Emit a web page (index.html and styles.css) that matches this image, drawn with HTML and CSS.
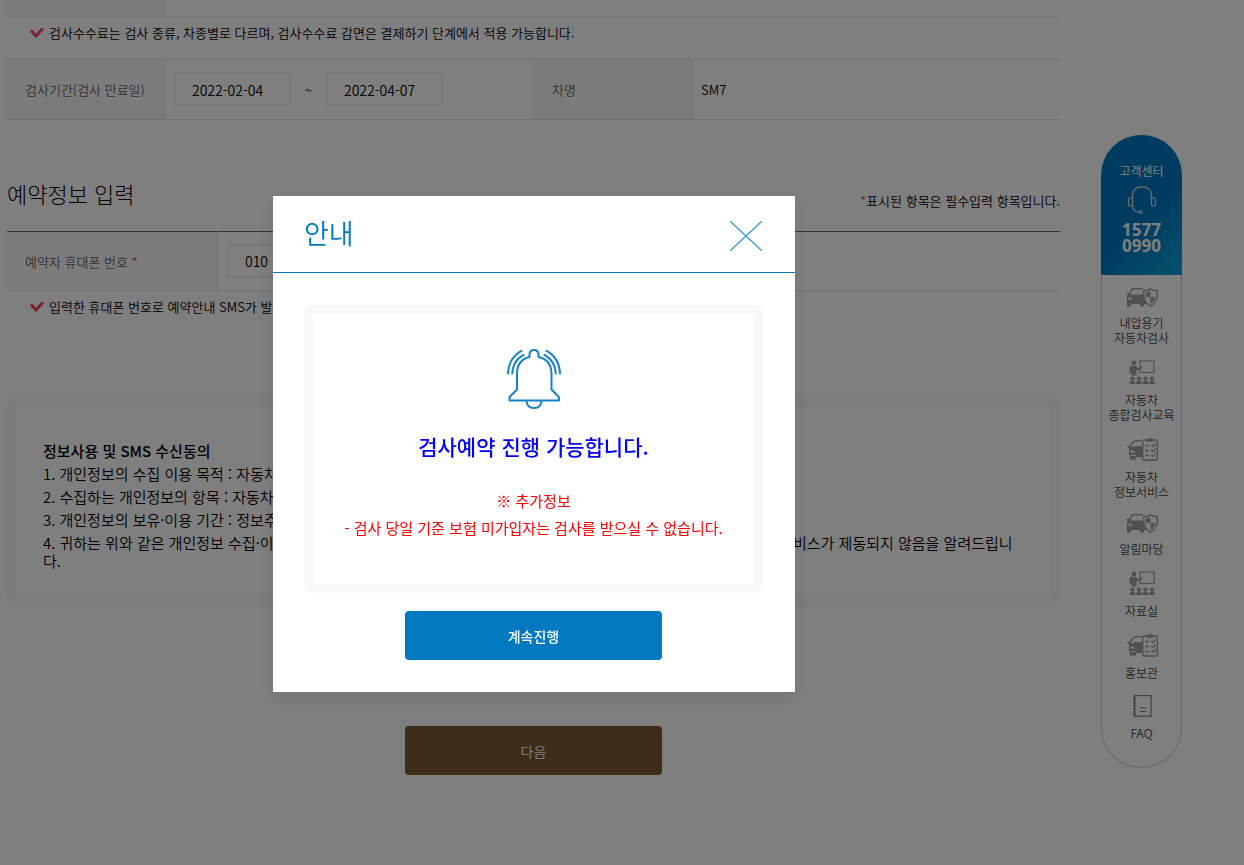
FILE: index.html
```html
<!DOCTYPE html>
<html lang="ko">
<head>
  <meta charset="UTF-8">
  <title>검사예약</title>
  <link rel="stylesheet" href="styles.css">
</head>
<body>
  <!-- shared icons -->
  <svg class="sprite" aria-hidden="true">
    <symbol id="icon-check" viewBox="0 0 14 12">
      <path d="M2 4.5 L6 9 L12 2.5" fill="none" stroke="#f04a66" stroke-width="3.2" stroke-linecap="round" stroke-linejoin="round"/>
    </symbol>
    <symbol id="icon-car" viewBox="0 0 32 19">
      <path d="M3.500 7 L5.500 1.800 Q6 .8 7 .8 H17" fill="none" stroke="#a0a0a0" stroke-width="1.600"/>
      <path d="M0 4.500 L2.500 4.500 L3.500 6.500 H17 Q17.500 12 21 15.500 V16 H18 V18.500 H14 V16 H5 V18.500 H1 V8 L2 6.500 Z" fill="#a0a0a0"/>
      <path d="M2.500 9 L6 10 V11.800 H3 Z" fill="#fff"/>
      <path d="M24.500 .8 Q27.500 2.500 31.200 2.700 V8 Q30.500 15 24.500 18.200 Q18.500 15 17.800 8 V2.700 Q21.500 2.500 24.500 .8 Z" fill="#fff" stroke="#a0a0a0" stroke-width="1.500"/>
      <path d="M24.500 3 V9 H19.800 V4.500 Q22.500 4.300 24.500 3 Z M24.500 9 H29.200 Q28.500 13.500 24.500 16 Z" fill="#a0a0a0"/>
    </symbol>
    <symbol id="icon-class" viewBox="0 0 26 24">
      <rect x="11" y="1" width="14" height="11.500" fill="none" stroke="#a0a0a0" stroke-width="1.200"/>
      <circle cx="5" cy="2.800" r="2.400" fill="#a0a0a0"/>
      <path d="M.5 7.500 Q.5 5.800 2.500 5.800 H7 L9.500 8.500 L13 6 L13.800 7.200 L9.500 10.800 L7.500 9.500 V15.500 H2.500 V13 H.5 Z" fill="#a0a0a0"/>
      <g fill="#a0a0a0">
        <circle cx="3.500" cy="18.500" r="2.100"/><path d="M.5 24 Q.5 20.500 3.500 20.500 T6.500 24 Z"/>
        <circle cx="10" cy="18.500" r="2.100"/><path d="M7 24 Q7 20.500 10 20.500 T13 24 Z"/>
        <circle cx="16.500" cy="18.500" r="2.100"/><path d="M13.500 24 Q13.500 20.500 16.500 20.500 T19.500 24 Z"/>
        <circle cx="23" cy="18.500" r="2.100"/><path d="M20 24 Q20 20.500 23 20.500 T26 24 Z"/>
      </g>
    </symbol>
    <symbol id="icon-list" viewBox="0 0 32 24">
      <path d="M4 9.500 L6.500 5.500 Q8 3.600 15.500 3.500" fill="none" stroke="#a0a0a0" stroke-width="1.500"/>
      <path d="M.5 8.500 L3 8.500 L4.500 10 Q10 9 16 9 V20 H10 V22.500 H4 V20 L3 18 V11 Z" fill="#a0a0a0"/>
      <path d="M4.500 13 L8.500 14.300 V15.800 H5 Z M4.500 18 H10 V19 H4.500 Z" fill="#fff"/>
      <rect x="16.700" y="3" width="14.600" height="20" rx="1.500" fill="#fff" stroke="#a0a0a0" stroke-width="1.500"/>
      <path d="M20.500 4.800 V2.500 H22.500 Q22.500 .3 24 .3 T25.500 2.500 H27.500 V4.800 Z" fill="#a0a0a0"/>
      <path d="M19 8.500 H23 M19 13.500 H23 M19 18.500 H23 M25.500 8 L27 9.500 L29.500 6.500 M25.500 13 L27 14.500 L29.500 11.500 M25.500 18 L27 19.500 L29.500 16.500" fill="none" stroke="#a0a0a0" stroke-width="1.300"/>
    </symbol>
    <symbol id="icon-book" viewBox="0 0 20 22">
      <rect x="2.500" y=".6" width="16.500" height="20.600" fill="none" stroke="#808080" stroke-width="1.200"/>
      <path d="M2.500 2 V21" stroke="#808080" stroke-width="2.600" stroke-dasharray="1.400 1.400"/>
      <path d="M8 13 H14.500 M8 16.500 H14.500" stroke="#808080" stroke-width="1.200"/>
    </symbol>
  </svg>

  <div class="page">
    <main class="content">
      <table class="form-table narrow">
        <tr class="cut">
          <th></th>
          <td></td>
        </tr>
      </table>
      <p class="note first-note"><svg class="check"><use href="#icon-check"/></svg>검사수수료는 검사 종류, 차종별로 다르며, 검사수수료 감면은 결제하기 단계에서 적용 가능합니다.</p>
      <table class="form-table narrow top-line">
        <tr>
          <th><label for="dateFrom">검사기간(검사 만료일)</label></th>
          <td>
            <div class="dates">
              <input type="text" id="dateFrom" value="2022-02-04">
              <span>~</span>
              <input type="text" aria-label="검사 만료일" value="2022-04-07">
            </div>
          </td>
          <th class="mid">차명</th>
          <td>SM7</td>
        </tr>
      </table>

      <div class="section-head">
        <h2>예약정보 입력</h2>
        <p><span class="star">*</span>표시된 항목은 필수입력 항목입니다.</p>
      </div>
      <table class="form-table wide">
        <tr>
          <th><label for="phone">예약자 휴대폰 번호 <span class="star">*</span></label></th>
          <td><input type="text" id="phone" value="010"></td>
        </tr>
      </table>
      <p class="note second-note"><svg class="check"><use href="#icon-check"/></svg>입력한 휴대폰 번호로 예약안내 SMS가 발송됩니다.</p>

      <section class="agree">
        <h3>정보사용 및 SMS 수신동의</h3>
        <p>1. 개인정보의 수집 이용 목적 : 자동차검사 예약 안내</p>
        <p>2. 수집하는 개인정보의 항목 : 자동차등록번호, 휴대폰 번호</p>
        <p>3. 개인정보의 보유·이용 기간 : 정보주체의 동의일로부터 1년</p>
        <p>4. 귀하는 위와 같은 개인정보 수집·이용에 동의하지 않으실 수 있으며, 동의를 거부하실 경우 자동차검사 예약안내 문자 서비스가 제동되지 않음을 알려드립니다.</p>
      </section>

      <button type="button" class="btn btn-next">다음</button>
    </main>

    <aside class="quick">
      <div class="quick-top">
        <span>고객센터</span>
        <svg class="headset" viewBox="0 0 28 28" fill="none" stroke="#ddd" stroke-width="1.200">
          <path d="M4.500 12 V10 Q4.500 .8 14 .8 T23.500 10 V12"/>
          <rect x=".6" y="12" width="3.900" height="8" rx="1"/>
          <rect x="23.500" y="12" width="3.900" height="8" rx="1"/>
          <path d="M4.500 20 Q5 26 11 26"/>
          <circle cx="12.700" cy="26" r="1.500"/>
        </svg>
        <strong>1577<br>0990</strong>
      </div>
      <nav class="quick-menu">
        <a href="#"><svg class="i-car"><use href="#icon-car"/></svg>내압용기<br>자동차검사</a>
        <a href="#"><svg class="i-class"><use href="#icon-class"/></svg>자동차<br>종합검사교육</a>
        <a href="#"><svg class="i-list"><use href="#icon-list"/></svg>자동차<br>정보서비스</a>
        <a href="#"><svg class="i-car"><use href="#icon-car"/></svg>알림마당</a>
        <a href="#"><svg class="i-class"><use href="#icon-class"/></svg>자료실</a>
        <a href="#"><svg class="i-list"><use href="#icon-list"/></svg>홍보관</a>
        <a href="#"><svg class="i-book"><use href="#icon-book"/></svg>FAQ</a>
      </nav>
    </aside>
  </div>

  <!-- popup -->
  <div class="overlay">
    <div class="modal" role="dialog" aria-labelledby="modalTitle">
      <div class="modal-head">
        <h1 id="modalTitle">안내</h1>
        <button type="button" class="close" aria-label="닫기">
          <svg viewBox="0 0 32 30"><path d="M0 0 L32 30 M32 0 L0 30" stroke="#3d9bd6" stroke-width="1.300"/></svg>
        </button>
      </div>
      <div class="modal-body">
        <div class="msg-box">
          <svg class="bell" viewBox="0 0 54 60" fill="none" stroke="#1482c8" stroke-width="2" stroke-linecap="round" stroke-linejoin="round">
            <path d="M22.500 8 V5.500 Q22.500 1 27 1 T31.500 5.500 V8 Q44.500 11 44.500 25 V40.500 L51 47 Q52 48 52 49.500 V51.500 H2.500 V49.500 Q2.500 48 3.500 47 L10 40.500 V25 Q10 11 22.500 8 Z"/>
            <path d="M19.500 52 Q20 59 27 59 T34.500 52"/>
            <path d="M14.500 1.800 Q1.500 9 1 24.500 M16.500 5.800 Q5.500 12 5.200 24.500"/>
            <path d="M39.500 1.800 Q52.500 9 53 24.500 M37.500 5.800 Q48.500 12 48.800 24.500"/>
          </svg>
          <p class="msg">검사예약 진행 가능합니다.</p>
          <p class="extra">※ 추가정보<br>- 검사 당일 기준 보험 미가입자는 검사를 받으실 수 없습니다.</p>
        </div>
        <button type="button" class="btn btn-go">계속진행</button>
      </div>
    </div>
  </div>
</body>
</html>
```
FILE: styles.css
```css
* {
  box-sizing: border-box;
}

body {
  margin: 0;
  font-family: "Noto Sans CJK KR", "Noto Sans", sans-serif;
  font-size: 13px;
  font-weight: 350;
  color: #000;
  background: #fff;
}

h1, h2, h3, p {
  margin: 0;
}

input, button {
  font-family: inherit;
}

.sprite {
  display: none;
}

.page {
  display: grid;
  grid-template-columns: minmax(0, 1fr) 81px;
  gap: 41px;
  align-items: start;
  padding: 0 62px 0 7px;
}

.content {
  display: flex;
  flex-direction: column;
}

/* Form tables */
.form-table {
  width: 100%;
  border-collapse: separate;
  border-spacing: 0;
  table-layout: fixed;
}

.form-table th,
.form-table td {
  height: 59px;
  border-bottom: 1px solid #e5e5e5;
  padding: 0 9px;
  text-align: left;
}

.form-table th {
  width: 158px;
  padding-left: 18px;
  font-weight: 350;
  color: #666;
  background: #f8f8f8;
  border-right: 1px solid #e5e5e5;
}

.form-table .cut th,
.form-table .cut td {
  height: 18px;
}

.form-table th.mid {
  width: 159px;
  border-left: 1px solid #e5e5e5;
}

.top-line th,
.top-line td {
  height: 61px;
  border-top: 1px solid #e5e5e5;
}

.wide th,
.wide td {
  height: 60px;
  border-top: 1px solid #666;
}

.wide th {
  width: 211px;
}

.form-table input {
  width: 117px;
  height: 33px;
  padding: 0 17px;
  border: 1px solid #e5e5e5;
  font-size: 14px;
  font-weight: 350;
  color: #000;
  background: #fff;
}

.dates {
  display: flex;
  align-items: center;
}

.dates span {
  width: 35px;
  text-align: center;
}

.star {
  color: #e8404f;
}

/* Notes with a red check */
.note {
  display: flex;
  align-items: center;
  gap: 5px;
  padding-left: 23px;
  line-height: 20px;
}

.check {
  width: 14px;
  height: 12px;
}

.first-note {
  margin: 5px 0 16px;
}

.second-note {
  margin: 6px 0 79px;
}

.section-head {
  display: flex;
  justify-content: space-between;
  align-items: flex-end;
  height: 111px;
  padding-bottom: 20px;
}

.section-head h2 {
  font-size: 22px;
  font-weight: 300;
  line-height: 36px;
}

.section-head p {
  line-height: 20px;
}

.agree {
  border: 9px solid #f8f8f8;
  border-radius: 8px;
  padding: 37px 27px 26px;
  font-size: 15px;
  line-height: 18px;
  word-break: break-all;
}

.agree h3 {
  font-size: 15px;
  font-weight: 500;
}

.agree p {
  margin-top: 5px;
}

.btn {
  display: block;
  width: 257px;
  height: 49px;
  border: 0;
  border-radius: 4px;
  font-size: 14px;
  color: #fff;
}

.btn-next {
  margin: 121px auto 0;
  font-weight: 350;
  background: #7c5c32;
}

/* Quick menu */
.quick {
  margin-top: 135px;
  text-align: center;
}

.quick-top {
  display: flex;
  flex-direction: column;
  align-items: center;
  height: 140px;
  padding-top: 28px;
  border-radius: 40px 40px 0 0;
  font-size: 12px;
  font-weight: 400;
  line-height: 16px;
  color: #fff;
  background: linear-gradient(135deg, #0079c1 60%, #0aa5d6);
}

.headset {
  width: 28px;
  height: 28px;
  margin: 7px 0 8px;
}

.quick-top strong {
  font-family: "Noto Sans", sans-serif;
  font-size: 17px;
  line-height: 16px;
}

.quick-menu {
  padding-bottom: 27px;
  border: 1px solid #ccc;
  border-top: 0;
  border-radius: 0 0 40px 40px;
}

.quick-menu a {
  display: block;
  padding-top: 15px;
  font-size: 12px;
  line-height: 15px;
  color: #444;
  text-decoration: none;
}

.quick-menu a:first-child {
  padding-top: 13px;
}

.quick-menu svg {
  display: block;
  margin: 0 auto 8px;
}

.i-car {
  width: 32px;
  height: 19px;
}

.i-class {
  width: 26px;
  height: 24px;
}

.i-list {
  width: 32px;
  height: 24px;
}

.i-book {
  width: 20px;
  height: 22px;
}

/* Popup */
.overlay {
  position: fixed;
  inset: 0;
  display: flex;
  justify-content: center;
  align-items: flex-start;
  padding: 196px 183px 0 7px;
  background: rgba(0, 0, 0, 0.5);
}

.modal {
  width: 522px;
  background: #fff;
  box-shadow: 0 5px 20px rgba(0, 0, 0, 0.1);
}

.modal-head {
  display: flex;
  justify-content: space-between;
  align-items: center;
  height: 77px;
  padding: 4px 33px 0 31px;
  border-bottom: 1px solid #0079c1;
}

.modal-head h1 {
  padding-bottom: 6px;
  font-size: 27px;
  font-weight: 350;
  line-height: 40px;
  color: #0079c1;
}

.close {
  padding: 0;
  border: 0;
  background: none;
}

.close svg {
  display: block;
  width: 32px;
  height: 30px;
}

.modal-body {
  padding: 32px 32px 32px 31px;
}

.msg-box {
  display: flex;
  flex-direction: column;
  align-items: center;
  height: 288px;
  padding-top: 35px;
  margin-bottom: 18px;
  border: 9px solid #f8f8f8;
  border-radius: 8px;
  text-align: center;
  white-space: nowrap;
}

.bell {
  width: 54px;
  height: 60px;
}

.msg {
  margin: 21px 0 25px;
  font-size: 21px;
  font-weight: 500;
  line-height: 32px;
  color: #00f;
}

.extra {
  font-size: 15px;
  line-height: 27px;
  font-weight: 400;
  color: #f00;
}

.btn-go {
  margin: 0 auto;
  font-weight: 500;
  background: #0079c1;
}
```
